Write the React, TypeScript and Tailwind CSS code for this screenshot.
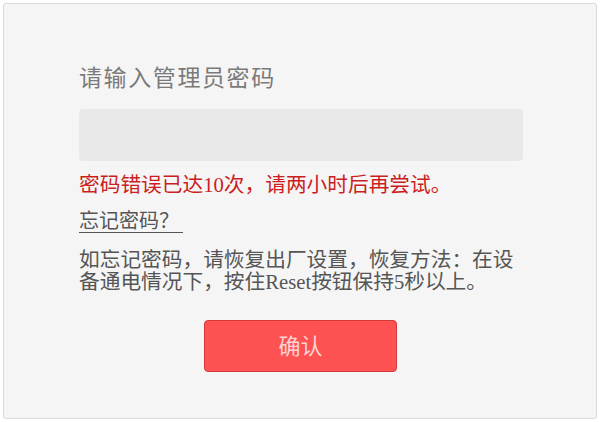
export default function App() {
  const font = { fontFamily: '"Liberation Serif", "Noto Sans CJK SC", serif' };
  return (
    <div className="w-[600px] h-[422px] bg-white p-[3px]" style={font}>
      <div className="h-[416px] rounded-[3px] border border-[#d9d9d9] bg-[#f5f5f5] pl-[75px] pt-[61px]">
        <div className="h-[28px] text-[23px] leading-[28px] tracking-[1.6px] text-[#7a7a7a]">请输入管理员密码</div>
        <div className="mt-[16px] h-[52px] w-[444px] rounded-[4px] bg-[#e9e9e9]" />
        <div className="mt-[12px] text-[20.7px] leading-[24px] text-[#cc1e22]">密码错误已达10次，请两小时后再尝试。</div>
        <div className="mt-[11px] leading-[24px]">
          <a
            className="inline-block w-[104px] border-b border-[#555] text-[20px] leading-[24px] text-[#555]"
            style={{ fontFamily: '"Noto Sans CJK SC", sans-serif' }}
          >
            忘记密码？
          </a>
        </div>
        <p className="mt-[14px] w-[444px] text-[20.7px] leading-[22px] text-[#555]">
          如忘记密码，请恢复出厂设置，恢复方法：在设备通电情况下，按住Reset按钮保持5秒以上。
        </p>
        <div className="mt-[27px] w-[444px]">
          <button className="ml-[125px] flex h-[52px] w-[193px] items-center justify-center rounded-[4px] border border-[#d23a3a] bg-[#fe5252] text-[22px] text-[#fbd3d3]">
            确认
          </button>
        </div>
      </div>
    </div>
  );
}
